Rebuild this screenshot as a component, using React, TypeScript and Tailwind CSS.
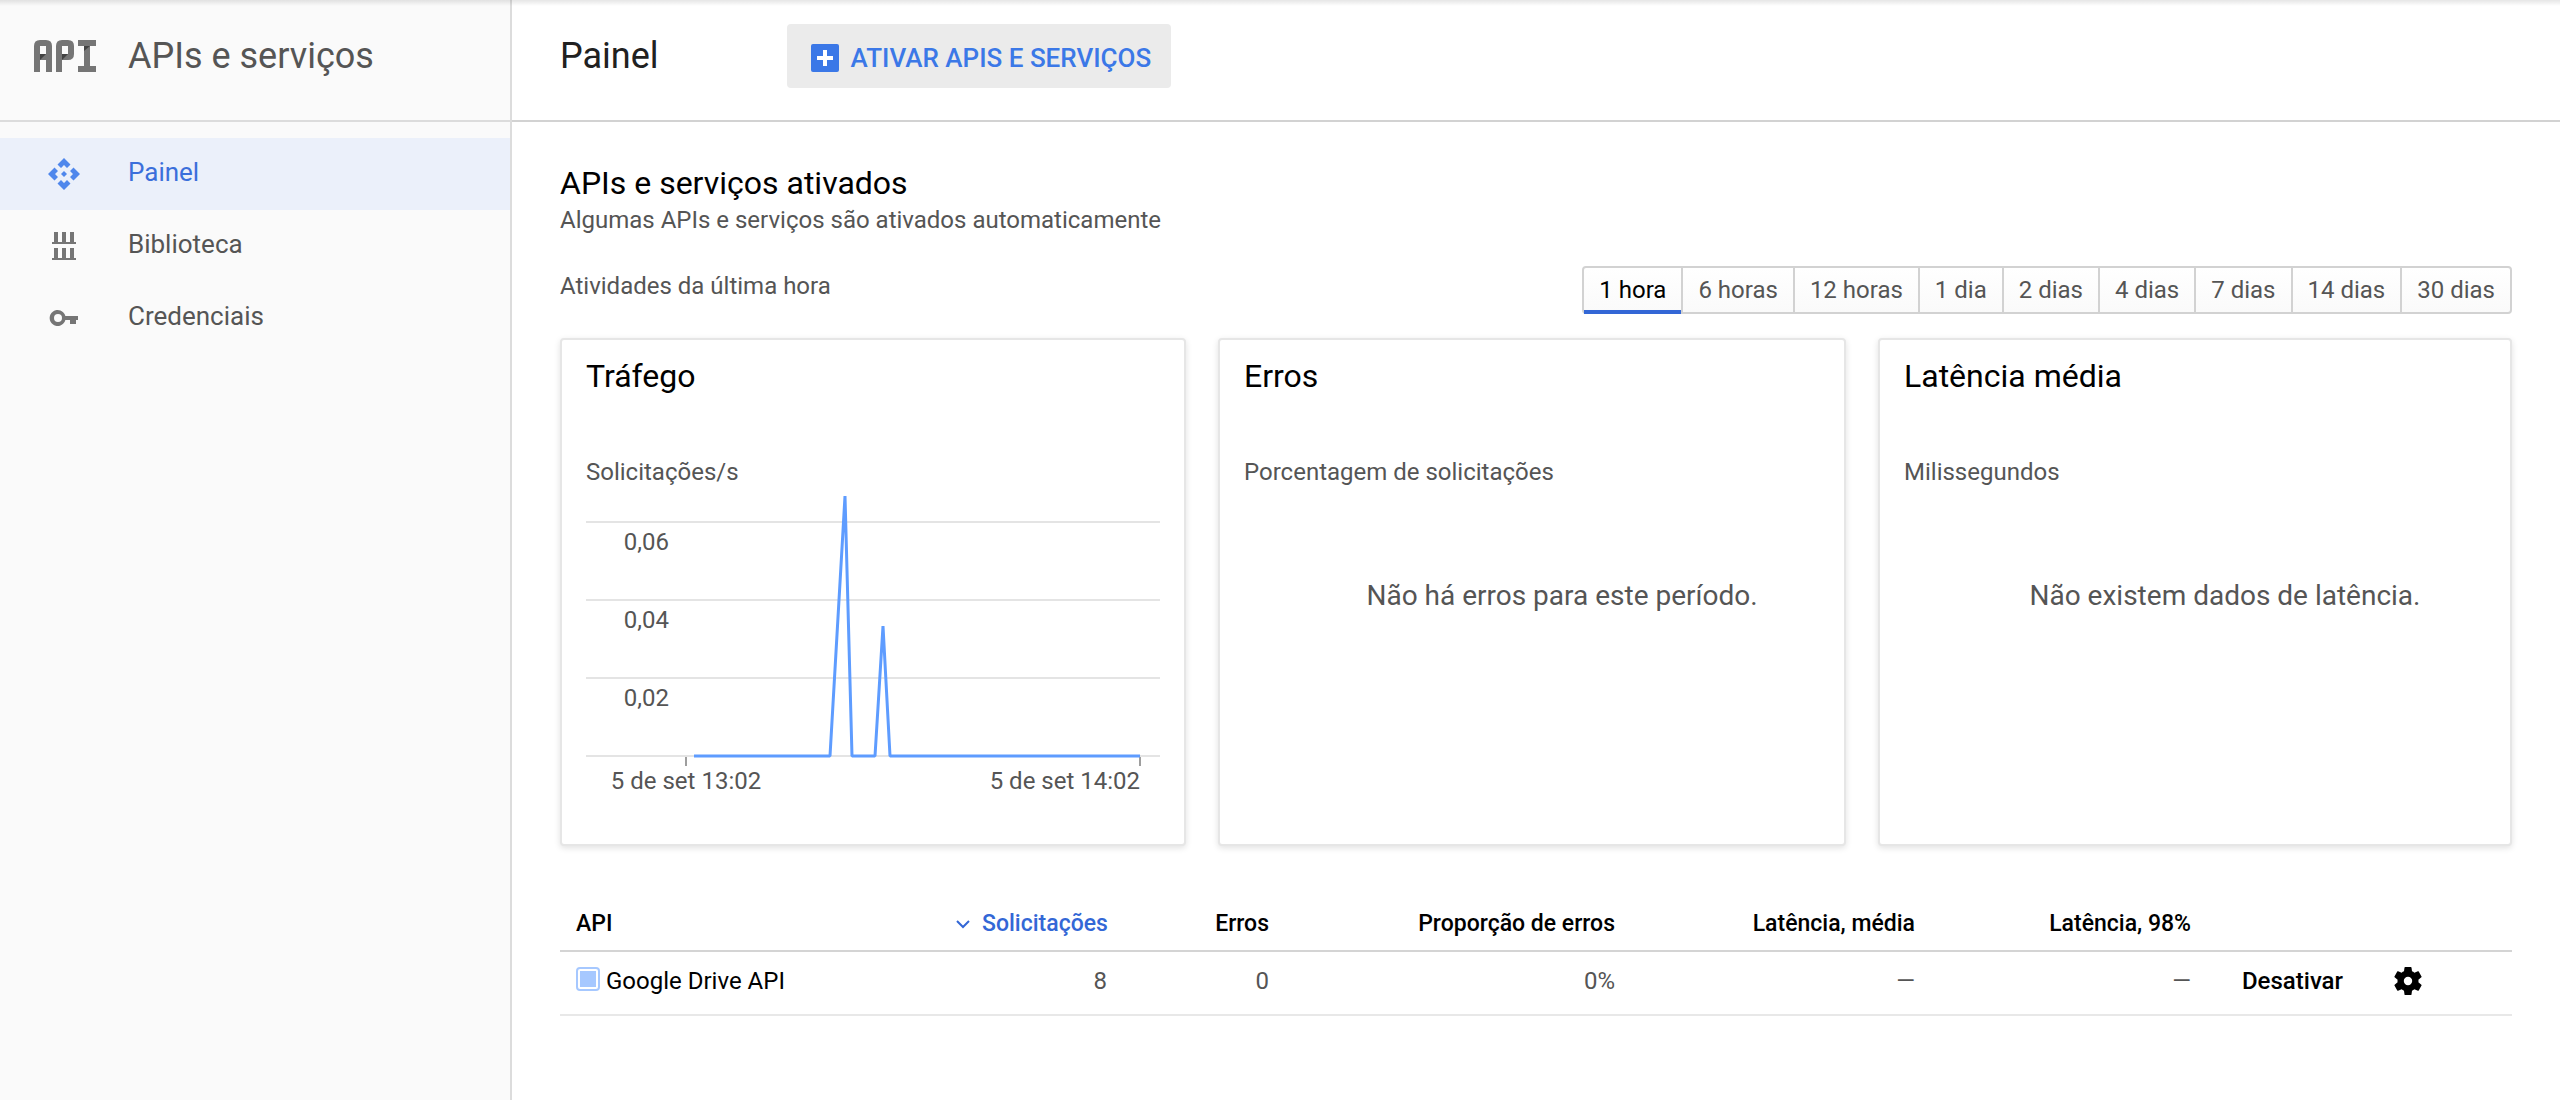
import { useState } from 'react';
import type { ReactNode } from 'react';

const PERIODS = ['1 hora', '6 horas', '12 horas', '1 dia', '2 dias', '4 dias', '7 dias', '14 dias', '30 dias'];

const Y_TICKS = [
  { label: '0,06', y: 28 },
  { label: '0,04', y: 106 },
  { label: '0,02', y: 184 },
];

const COLUMN_WIDTHS = [380, 183, 162, 346, 300, 276, 171, 134];

function ApiLogo() {
  return (
    <svg viewBox="0 0 62 32" className="h-8 w-[62px] shrink-0" aria-hidden="true">
      <g fill="#757575" fillRule="evenodd">
        <path d="M0 6Q0 0 6 0H12Q18 0 18 6V32H12V20H6V32H0ZM6 6V14H12V6Z" />
        <path d="M22 6Q22 0 28 0H34Q40 0 40 6V14Q40 20 34 20H28V32H22ZM28 6V14H34V6Z" />
        <path d="M44 0H62V6H56V26H62V32H44V26H50V6H44Z" />
      </g>
      <g fill="#424242">
        <path d="M6 14H12L6 20Z" />
        <path d="M28 14H34L28 20Z" />
        <path d="M50 6H56L50 11Z" />
      </g>
    </svg>
  );
}

function DashboardIcon() {
  return (
    <svg viewBox="0 0 32 32" className="size-8" fill="currentColor" aria-hidden="true">
      <path d="M16 0L22.5 6.5L19 10L16 7L13 10L9.5 6.5Z" />
      <path d="M32 16L25.5 22.5L22 19L25 16L22 13L25.5 9.5Z" />
      <path d="M16 32L9.5 25.5L13 22L16 25L19 22L22.5 25.5Z" />
      <path d="M0 16L6.5 9.5L10 13L7 16L10 19L6.5 22.5Z" />
      <path d="M16 13L19 16L16 19L13 16Z" />
    </svg>
  );
}

function LibraryIcon() {
  return (
    <svg viewBox="0 0 32 32" className="size-8" fill="currentColor" aria-hidden="true">
      <path d="M6 2h4v10h4V2h4v10h4V2h4v10h2v2H4v-2h2z" />
      <path d="M6 18h4v10h4V18h4v10h4V18h4v10h2v2H4v-2h2z" />
    </svg>
  );
}

function KeyIcon() {
  return (
    <svg viewBox="0 0 32 32" className="size-8" fill="currentColor" fillRule="evenodd" aria-hidden="true">
      <path d="M17.4 14A8 8 0 1 0 17.4 18H22V22H28V18H30V14ZM10 12A4 4 0 1 1 10 20A4 4 0 0 1 10 12Z" />
    </svg>
  );
}

function NavItem({ icon, label, active }: { icon: ReactNode; label: string; active?: boolean }) {
  return (
    <li>
      <a
        href="#"
        aria-current={active ? 'page' : undefined}
        className={
          active
            ? 'flex h-18 items-center gap-12 bg-[#ebf0fa] pl-12 text-[26px] text-[#3b6fdb]'
            : 'flex h-18 items-center gap-12 pl-12 text-[26px] text-[#555]'
        }
      >
        <span className={active ? 'text-[#4f87ec]' : 'text-[#757575]'}>{icon}</span>
        <span className="pb-1">{label}</span>
      </a>
    </li>
  );
}

function Card({ title, unit, children }: { title: string; unit: string; children: ReactNode }) {
  return (
    <section className="min-h-[508px] rounded border-2 border-[#e6e6e6] bg-white px-6 pt-4 shadow-[0_2px_6px_rgba(0,0,0,0.12)]">
      <h3 className="text-[32px] leading-10 text-black">{title}</h3>
      <p className="mt-15 text-[24px] leading-8">{unit}</p>
      {children}
    </section>
  );
}

function TrafficChart() {
  return (
    <svg viewBox="0 0 574 312" className="mt-1.5 w-full" role="img" aria-label="Solicitações por segundo">
      <g fill="#e4e4e4">
        <rect x="0" y="27" width="574" height="2" />
        <rect x="0" y="105" width="574" height="2" />
        <rect x="0" y="183" width="574" height="2" />
        <rect x="0" y="261" width="574" height="2" />
      </g>
      <g fill="#9e9e9e">
        <rect x="99" y="263" width="2" height="9" />
        <rect x="553" y="263" width="2" height="9" />
      </g>
      <path
        d="M108 262H244L259 2L266 262H289L297 132L304 262H554"
        fill="none"
        stroke="#5e9cff"
        strokeWidth="3"
        strokeLinejoin="bevel"
      />
      <g fill="#555" fontSize="24">
        {Y_TICKS.map((tick) => (
          <text key={tick.label} x="83" y={tick.y + 28} textAnchor="end">
            {tick.label}
          </text>
        ))}
        <text x="100" y="295" textAnchor="middle">
          5 de set 13:02
        </text>
        <text x="554" y="295" textAnchor="end">
          5 de set 14:02
        </text>
      </g>
    </svg>
  );
}

function EmptyMessage({ children }: { children: ReactNode }) {
  return <p className="mt-22 pl-15 text-center text-[28px] leading-10">{children}</p>;
}

function ApiTable() {
  return (
    <table className="mt-12 w-full table-fixed border-collapse text-right text-[24px]">
      <colgroup>
        {COLUMN_WIDTHS.map((width, i) => (
          <col key={i} style={{ width }} />
        ))}
      </colgroup>
      <thead className="text-[23px] text-black">
        <tr className="h-[57px] border-b-2 border-[#d4d4d4] *:px-4 *:pt-1 *:font-medium">
          <th scope="col" className="text-left">API</th>
          <th scope="col" aria-sort="descending" className="text-[#3367d6]">
            <button type="button" className="ml-auto flex items-center gap-3 font-medium">
              <svg viewBox="0 0 14 9" className="h-[9px] w-3.5" fill="none" stroke="currentColor" strokeWidth="2" aria-hidden="true">
                <path d="M1 1L7 7L13 1" />
              </svg>
              Solicitações
            </button>
          </th>
          <th scope="col">Erros</th>
          <th scope="col">Proporção de erros</th>
          <th scope="col">Latência, média</th>
          <th scope="col">Latência, 98%</th>
          <td />
          <td />
        </tr>
      </thead>
      <tbody>
        <tr className="h-16 border-b-2 border-[#e8e8e8] *:px-4 *:pb-1">
          <td className="text-left text-black">
            <a href="#" className="flex items-center gap-1.5">
              <span className="mb-1 flex size-6 items-center justify-center rounded border-2 border-[#a6c8ff] bg-white">
                <span className="size-4 bg-[#a6c8ff]" />
              </span>
              Google Drive API
            </a>
          </td>
          <td>8</td>
          <td>0</td>
          <td>0%</td>
          <td>—</td>
          <td>—</td>
          <td className="text-center text-black">
            <button type="button" className="font-medium">Desativar</button>
          </td>
          <td className="text-left text-black">
            <button type="button" aria-label="Configurações" className="block">
              <svg viewBox="2 2 20 20" className="size-7" fill="currentColor" aria-hidden="true">
                <path d="M19.43 12.98c.04-.32.07-.64.07-.98s-.03-.66-.07-.98l2.11-1.65c.19-.15.24-.42.12-.64l-2-3.46c-.12-.22-.39-.3-.61-.22l-2.49 1c-.52-.4-1.08-.73-1.69-.98l-.38-2.65C14.46 2.18 14.25 2 14 2h-4c-.25 0-.46.18-.49.42l-.38 2.65c-.61.25-1.17.59-1.69.98l-2.49-1c-.23-.09-.49 0-.61.22l-2 3.46c-.13.22-.07.49.12.64l2.11 1.65c-.04.32-.07.65-.07.98s.03.66.07.98l-2.11 1.65c-.19.15-.24.42-.12.64l2 3.46c.12.22.39.3.61.22l2.49-1c.52.4 1.08.73 1.69.98l.38 2.65c.03.24.24.42.49.42h4c.25 0 .46-.18.49-.42l.38-2.65c.61-.25 1.17-.59 1.69-.98l2.49 1c.23.09.49 0 .61-.22l2-3.46c.12-.22.07-.49-.12-.64l-2.11-1.65zM12 15a3 3 0 1 1 0-6 3 3 0 0 1 0 6z" />
              </svg>
            </button>
          </td>
        </tr>
      </tbody>
    </table>
  );
}

export default function App() {
  const [period, setPeriod] = useState(PERIODS[0]);

  return (
    <div className="relative flex min-h-screen bg-white font-['Roboto',sans-serif] text-[#555]">
      <div className="pointer-events-none absolute inset-x-0 top-0 h-1.5 bg-linear-to-b from-black/10 to-transparent" />

      <aside className="w-[512px] shrink-0 border-r-2 border-[#dcdcdc] bg-[#fafafa]">
        <div className="flex h-[122px] items-center gap-8 border-b-2 border-[#dcdcdc] pb-2 pl-[34px]">
          <ApiLogo />
          <span className="text-[36px] leading-10">APIs e serviços</span>
        </div>
        <nav className="pt-4">
          <ul>
            <NavItem icon={<DashboardIcon />} label="Painel" active />
            <NavItem icon={<LibraryIcon />} label="Biblioteca" />
            <NavItem icon={<KeyIcon />} label="Credenciais" />
          </ul>
        </nav>
      </aside>

      <div className="min-w-0 flex-1">
        <header className="flex h-[122px] items-center gap-32 border-b-2 border-[#d2d2d2] px-12 pb-2">
          <h1 className="text-[36px] leading-10 text-[#212121]">Painel</h1>
          <button
            type="button"
            className="flex h-16 items-center gap-3 rounded bg-[#ebebeb] pt-1 pr-5 pl-6 text-[26px] font-medium text-[#3b78e7]"
          >
            <svg viewBox="0 0 28 28" className="size-7" aria-hidden="true">
              <rect width="28" height="28" rx="2" fill="currentColor" />
              <path d="M14 6V22M6 14H22" stroke="#fff" strokeWidth="4" />
            </svg>
            ATIVAR APIS E SERVIÇOS
          </button>
        </header>

        <main className="px-12 pt-10">
          <h2 className="text-[32px] leading-[42px] text-black">APIs e serviços ativados</h2>
          <p className="text-[24px] leading-8">Algumas APIs e serviços são ativados automaticamente</p>

          <div className="mt-[30px] flex items-center justify-between">
            <p className="pb-2 text-[24px] leading-8">Atividades da última hora</p>
            <div
              role="group"
              aria-label="Período"
              className="flex h-12 divide-x-2 divide-[#d2d2d2] rounded border-2 border-[#d2d2d2] bg-linear-to-b from-white to-[#fafafa]"
            >
              {PERIODS.map((name) => (
                <button
                  key={name}
                  type="button"
                  aria-pressed={name === period}
                  onClick={() => setPeriod(name)}
                  className={
                    name === period
                      ? 'relative px-[15px] text-[24px] text-black after:absolute after:inset-x-0 after:-bottom-0.5 after:h-1 after:bg-[#3367d6]'
                      : 'px-[15px] text-[24px]'
                  }
                >
                  {name}
                </button>
              ))}
            </div>
          </div>

          <div className="mt-6 grid grid-cols-[626fr_628fr_634fr] gap-8">
            <Card title="Tráfego" unit="Solicitações/s">
              <TrafficChart />
            </Card>
            <Card title="Erros" unit="Porcentagem de solicitações">
              <EmptyMessage>Não há erros para este período.</EmptyMessage>
            </Card>
            <Card title="Latência média" unit="Milissegundos">
              <EmptyMessage>Não existem dados de latência.</EmptyMessage>
            </Card>
          </div>

          <ApiTable />
        </main>
      </div>
    </div>
  );
}
